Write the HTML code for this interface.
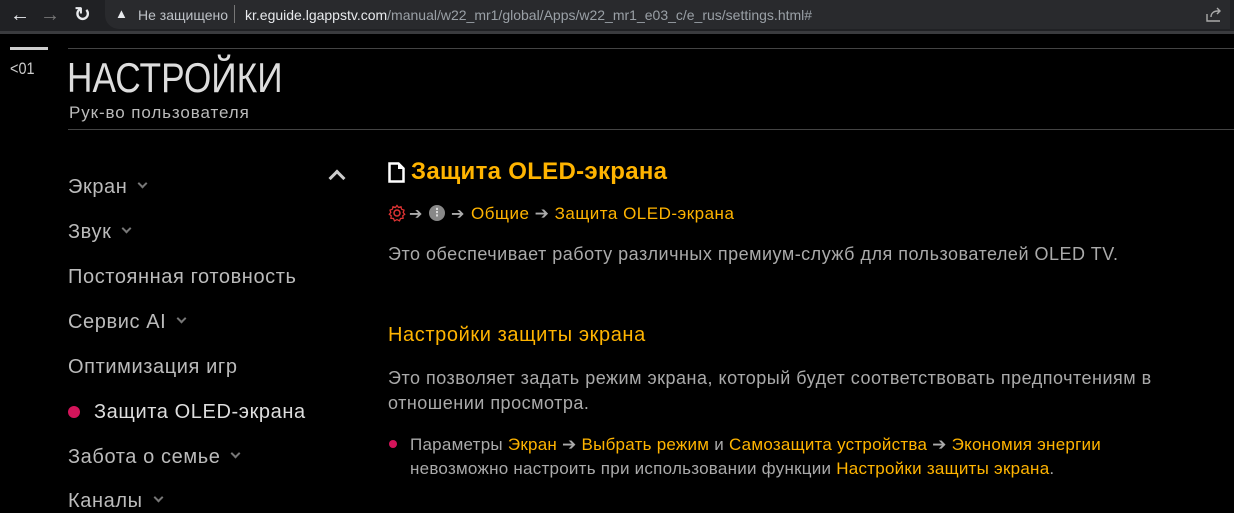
<!DOCTYPE html>
<html><head><meta charset="utf-8"><style>
*{margin:0;padding:0;box-sizing:border-box}
body{width:1234px;height:503px;overflow:hidden;background:#000;font-family:"Liberation Sans","DejaVu Sans",sans-serif;position:relative}
.bar{position:absolute;left:0;top:0;width:1234px;height:31px;background:#202124}
.line2{position:absolute;left:0;top:31px;width:1234px;height:3px;background:#3a3b3e}
.omni{position:absolute;left:105px;top:0;width:1125px;height:29px;background:#292a2d;border-radius:0 0 0 14px}
.a{position:absolute;white-space:nowrap}
.o{color:#ffb400}
.nav{position:absolute;left:68px;font-size:20px;color:#bbb;letter-spacing:.6px}
.chev{display:inline-block;width:7px;height:7px;border-right:2px solid #777;border-bottom:2px solid #777;transform:rotate(45deg);margin-left:12px;position:relative;top:-6px}
</style></head><body>
<div class="bar"></div><div class="omni"></div><div class="line2"></div>
<div class="a" style="left:10px;top:4px;font-size:20px;color:#e8eaed">←</div>
<div class="a" style="left:40px;top:4px;font-size:20px;color:#777">→</div>
<div class="a" style="left:74px;top:2px;font-size:20px;color:#e8eaed;font-weight:bold">↻</div>
<div class="a" style="left:115px;top:6px;font-size:13px;color:#e8eaed">▲</div>
<div class="a" style="left:138px;top:7px;font-size:14px;color:#bdc1c6">Не защищено</div>
<div class="a" style="left:234px;top:5px;width:1px;height:18px;background:#777"></div>
<div class="a" style="left:245px;top:7px;font-size:14px;color:#9aa0a6"><span style="color:#e8eaed">kr.eguide.lgappstv.com</span>/manual/w22_mr1/global/Apps/w22_mr1_e03_c/e_rus/settings.html#</div>
<svg class="a" style="left:1205px;top:5px" width="18" height="18" viewBox="0 0 18 18" fill="none" stroke="#aaa" stroke-width="1.4"><path d="M2 9v7h13"/><path d="M6 12c0-4 3-6 7-6h2M12 3l3 3-3 3"/></svg>

<div class="a" style="left:10px;top:47px;width:38px;height:3px;background:#ccc"></div>
<div class="a" style="left:10px;top:59px;font-size:17px;color:#ccc;transform:scaleX(.85);transform-origin:left">&lt;01</div>
<div class="a" style="left:68px;top:48px;width:1166px;height:1px;background:#444"></div>
<div class="a" style="left:67px;top:54px;font-size:42px;color:#ddd;transform:scaleX(.84);transform-origin:left">НАСТРОЙКИ</div>
<div class="a" style="left:69px;top:103px;font-size:17px;color:#bbb;letter-spacing:.9px">Рук-во пользователя</div>
<div class="a" style="left:68px;top:129px;width:1166px;height:1px;background:#444"></div>

<div class="nav" style="top:176px">Экран<span class="chev"></span></div>
<div class="nav" style="top:221px">Звук<span class="chev"></span></div>
<div class="nav" style="top:266px">Постоянная готовность</div>
<div class="nav" style="top:311px">Сервис AI<span class="chev"></span></div>
<div class="nav" style="top:356px">Оптимизация игр</div>
<div class="a" style="left:68px;top:406px;width:12px;height:12px;border-radius:50%;background:#d4145a"></div>
<div class="nav" style="top:401px;left:94px;color:#ddd">Защита OLED-экрана</div>
<div class="nav" style="top:446px">Забота о семье<span class="chev"></span></div>
<div class="nav" style="top:490px">Каналы<span class="chev"></span></div>
<div class="a" style="left:331px;top:172px;width:12px;height:12px;border-left:3px solid #ccc;border-top:3px solid #ccc;transform:rotate(45deg)"></div>

<svg class="a" style="left:388px;top:162px" width="17" height="21" viewBox="0 0 17 21"><path d="M1.5 1.5h9l5 5v13h-14z" fill="none" stroke="#fff" stroke-width="2.5"/><path d="M10 1v6h6" fill="#fff"/></svg>
<div class="a o" style="left:411px;top:158px;font-size:24px;font-weight:bold;letter-spacing:.3px">Защита OLED-экрана</div>
<svg class="a" style="left:388px;top:204px" width="18" height="18" viewBox="0 0 18 18"><circle cx="9" cy="9" r="3" fill="none" stroke="#d33" stroke-width="1.5"/><path d="M9 1.5l1.5 2 2.5-.8.6 2.5 2.4.9-.8 2.4 1.5 1.8-1.9 1.5.3 2.5-2.6.2-1 2.4-2.5-1.3-2.5 1.3-1-2.4-2.6-.2.3-2.5-1.9-1.5 1.5-1.8-.8-2.4 2.4-.9.6-2.5 2.5.8z" fill="none" stroke="#d33" stroke-width="1.3"/></svg>
<div class="a" style="left:409px;top:204px;font-size:16px;color:#aaa">➔</div>
<div class="a" style="left:429px;top:205px;width:16px;height:16px;border-radius:50%;background:#888;color:#ddd;font-size:11px;text-align:center;line-height:16px;font-weight:bold">⋮</div>
<div class="a" style="left:451px;top:204px;font-size:16px;color:#aaa">➔</div>
<div class="a o" style="left:471px;top:204px;font-size:17px;letter-spacing:.5px">Общие <span style="color:#aaa">➔</span> Защита OLED-экрана</div>
<div class="a" style="left:388px;top:244px;font-size:18px;color:#aaa;letter-spacing:.5px">Это обеспечивает работу различных премиум-служб для пользователей OLED TV.</div>
<div class="a o" style="left:388px;top:324px;font-size:20px;letter-spacing:.6px">Настройки защиты экрана</div>
<div class="a" style="left:388px;top:366px;font-size:18px;color:#aaa;line-height:25px;letter-spacing:.5px">Это позволяет задать режим экрана, который будет соответствовать предпочтениям в<br>отношении просмотра.</div>
<div class="a" style="left:389px;top:440px;width:8px;height:8px;border-radius:50%;background:#d4145a"></div>
<div class="a" style="left:410px;top:433px;font-size:17px;color:#aaa;line-height:24px;letter-spacing:.25px">Параметры <span class="o">Экран</span> ➔ <span class="o">Выбрать режим</span> и <span class="o">Самозащита устройства</span> ➔ <span class="o">Экономия энергии</span><br>невозможно настроить при использовании функции <span class="o">Настройки защиты экрана</span>.</div>
</body></html>
